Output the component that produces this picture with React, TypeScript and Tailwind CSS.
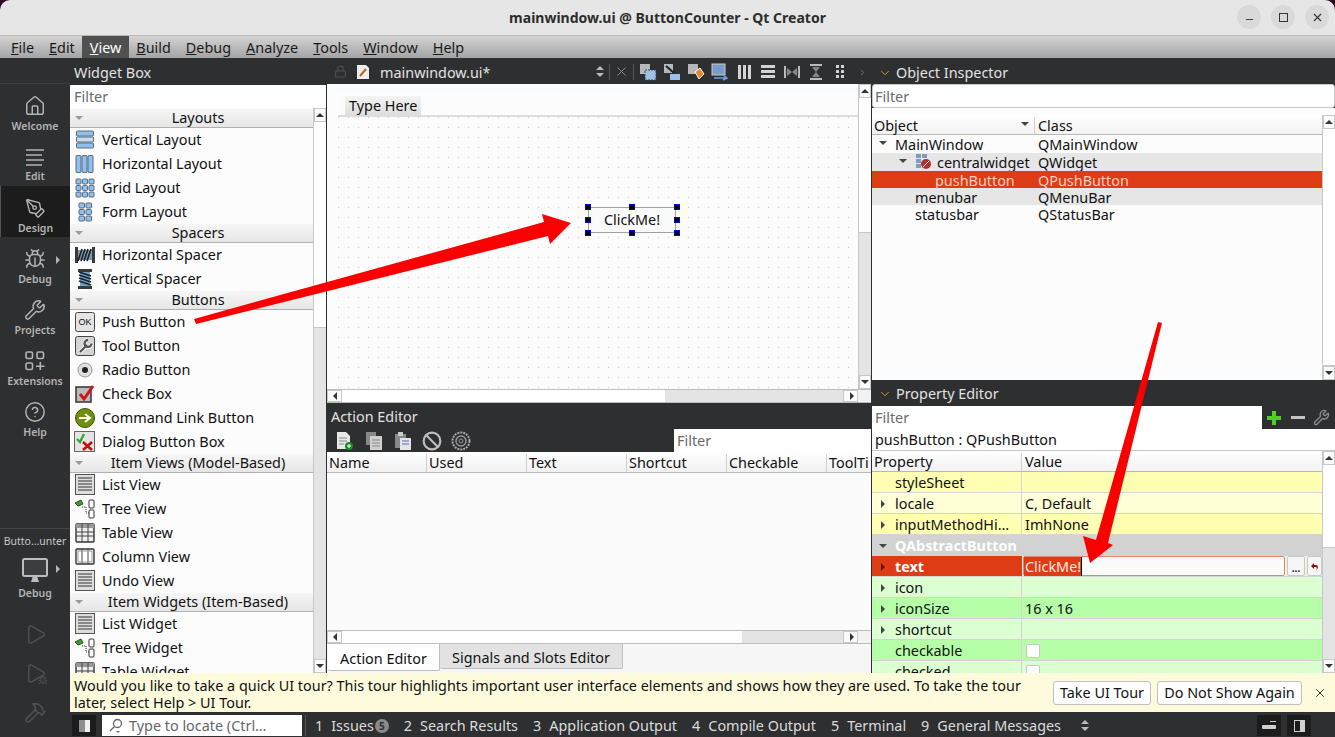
import React from 'react';
import { House, PenTool, Bug, Wrench, CircleHelp, Play, Hammer, ChevronDown, ChevronRight, X, Lock, Ban, Minus } from 'lucide-react';

const MENU = ['File', 'Edit', 'View', 'Build', 'Debug', 'Analyze', 'Tools', 'Window', 'Help'];

function Tri({ dir = 'down', className = '' }: { dir?: 'down' | 'up' | 'left' | 'right'; className?: string }) {
  const pts = { down: '0,1 8,1 4,5', up: '0,5 8,5 4,1', left: '5,0 5,8 1,4', right: '2,0 2,8 6,4' }[dir];
  const wide = dir === 'up' || dir === 'down';
  return (
    <svg width={wide ? 8 : 6} height={wide ? 6 : 8} viewBox={wide ? '0 0 8 6' : '0 0 6 8'} className={className}>
      <polygon points={pts} fill="currentColor" />
    </svg>
  );
}

function Bars({ kind }: { kind: string }) {
  const blue = '#8fc0ee';
  const edge = '#5a6a7a';
  if (kind === 'vlayout')
    return <svg width="20" height="20">{[1, 7, 13].map((y) => <rect key={y} x="1.5" y={y} width="17" height="5" fill={y === 7 ? '#c5dcf2' : blue} stroke={edge} rx="1" />)}</svg>;
  if (kind === 'hlayout')
    return <svg width="20" height="20">{[1, 7, 13].map((x) => <rect key={x} x={x} y="1.5" width="5" height="17" fill={blue} stroke={edge} rx="1" />)}</svg>;
  if (kind === 'grid')
    return <svg width="20" height="20">{[1, 7.5, 14].flatMap((x) => [1, 7.5, 14].map((y) => <rect key={`${x}-${y}`} x={x} y={y} width="5" height="5" fill={blue} stroke={edge} rx="1" />))}</svg>;
  if (kind === 'form')
    return <svg width="20" height="20">{[4, 11].flatMap((x) => [1, 7.5, 14].map((y) => <rect key={`${x}-${y}`} x={x} y={y} width="5.5" height="5" fill={blue} stroke={edge} rx="1" />))}</svg>;
  if (kind === 'hspacer')
    return (
      <svg width="20" height="20">
        <rect x="0" y="2" width="3" height="16" fill="#3a3a3a" /><rect x="17" y="2" width="3" height="16" fill="#3a3a3a" />
        <rect x="3" y="5" width="14" height="10" fill="#7f99ad" />
        {[3, 6, 9, 12].map((x) => <path key={x} d={`M${x} 16 L${x + 4} 4`} stroke="#17222c" strokeWidth="1.6" />)}
      </svg>
    );
  if (kind === 'vspacer')
    return (
      <svg width="20" height="20">
        <rect x="3" y="0" width="14" height="3" fill="#3a3a3a" /><rect x="3" y="17" width="14" height="3" fill="#3a3a3a" />
        <rect x="5" y="3" width="10" height="14" fill="#6fa0c8" />
        {[3, 6, 9, 12].map((y) => <path key={y} d={`M4 ${y} L16 ${y + 4}`} stroke="#17222c" strokeWidth="1.6" />)}
      </svg>
    );
  if (kind === 'push')
    return <svg width="20" height="20"><rect x="0.5" y="0.5" width="19" height="19" rx="2" fill="#e4e4e4" stroke="#444" /><text x="10" y="13" fontSize="9" textAnchor="middle" fill="#111" fontFamily="Liberation Sans, sans-serif">OK</text></svg>;
  if (kind === 'tool')
    return <svg width="20" height="20"><rect x="0.5" y="0.5" width="19" height="19" rx="2" fill="#d4d4d4" stroke="#444" /><path d="M5 16 L12 9 M13 4 a3.5 3.5 0 1 0 3.5 3.5" stroke="#fff" strokeWidth="4" fill="none" /><path d="M5 16 L12 9 M13 4 a3.5 3.5 0 1 0 3.5 3.5" stroke="#555" strokeWidth="2.4" fill="none" /></svg>;
  if (kind === 'radio')
    return <svg width="20" height="20"><circle cx="10" cy="10" r="7" fill="#e0e0e0" stroke="#999" /><circle cx="10" cy="10" r="3" fill="#222" /></svg>;
  if (kind === 'check')
    return <svg width="20" height="20"><rect x="1" y="3" width="15" height="15" fill="#bbb" stroke="#333" strokeWidth="1.5" /><path d="M5 10 L9 15 L18 2" stroke="#d2141e" strokeWidth="3" fill="none" /></svg>;
  if (kind === 'cmd')
    return <svg width="20" height="20"><circle cx="10" cy="10" r="9.5" fill="#6f8f0f" stroke="#3c500a" /><path d="M4 10 H14 M10 6 L15 10 L10 14" stroke="#fff" strokeWidth="2" fill="none" /></svg>;
  if (kind === 'dialog')
    return <svg width="22" height="22"><rect x="0.5" y="0.5" width="20" height="20" fill="#e4e4e4" stroke="#666" /><path d="M3 8 L6 11 L10 3" stroke="#35a83a" strokeWidth="2.4" fill="none" /><path d="M9 11 L18 19 M18 11 L9 19" stroke="#c01010" strokeWidth="2.6" /></svg>;
  if (kind === 'list')
    return <svg width="20" height="22"><rect x="0.5" y="0.5" width="19" height="20" fill="#ddd" stroke="#555" />{[3, 6, 9, 12, 15].map((y) => <rect key={y} x="3" y={y} width="14" height="2" fill="#888" />)}</svg>;
  if (kind === 'tree')
    return <svg width="22" height="20"><path d="M1 4 L7 1 L9 5 L4 7 Z" fill="#3f9a35" stroke="#1f5a1a" /><path d="M8 8 H12 M12 8 V14 H15" stroke="#333" strokeDasharray="1 1" fill="none" /><rect x="15" y="1" width="5" height="8" rx="1" fill="#fff" stroke="#333" /><rect x="15" y="11" width="5" height="8" rx="1" fill="#fff" stroke="#333" /></svg>;
  if (kind === 'table')
    return <svg width="20" height="20"><rect x="1" y="1" width="18" height="18" rx="1" fill="#eee" stroke="#333" strokeWidth="1.4" /><rect x="1" y="1" width="18" height="4" fill="#999" /><path d="M1 9 H19 M1 13 H19 M7 1 V19 M13 1 V19" stroke="#444" /></svg>;
  if (kind === 'column')
    return <svg width="20" height="20"><rect x="1" y="2" width="18" height="15" rx="1" fill="#fff" stroke="#333" strokeWidth="1.4" /><path d="M7 2 V17 M13 2 V17" stroke="#444" /><rect x="3" y="4" width="14" height="11" fill="none" stroke="#999" /></svg>;
  return null;
}

function WidgetRow({ icon, label }: { icon: string; label: string }) {
  return (
    <div className="h-6 flex items-center shrink-0">
      <div className="w-8 pr-[2px] flex justify-center shrink-0"><Bars kind={icon} /></div>
      <span className="text-[#111]">{label}</span>
    </div>
  );
}

function Category({ label }: { label: string }) {
  return (
    <div className="relative h-[19px] shrink-0 flex items-center justify-center bg-gradient-to-b from-[#f6f6f6] to-[#e6e6e6] border-b border-[#b0b0b0] text-[#111]">
      <Tri className="absolute left-[5px] top-[6px] text-[#999]" />
      <span className="pl-[13px]">{label}</span>
    </div>
  );
}

const BOX: { cat: string; items: [string, string][] }[] = [
  { cat: 'Layouts', items: [['vlayout', 'Vertical Layout'], ['hlayout', 'Horizontal Layout'], ['grid', 'Grid Layout'], ['form', 'Form Layout']] },
  { cat: 'Spacers', items: [['hspacer', 'Horizontal Spacer'], ['vspacer', 'Vertical Spacer']] },
  { cat: 'Buttons', items: [['push', 'Push Button'], ['tool', 'Tool Button'], ['radio', 'Radio Button'], ['check', 'Check Box'], ['cmd', 'Command Link Button'], ['dialog', 'Dialog Button Box']] },
  { cat: 'Item Views (Model-Based)', items: [['list', 'List View'], ['tree', 'Tree View'], ['table', 'Table View'], ['column', 'Column View'], ['list', 'Undo View']] },
  { cat: 'Item Widgets (Item-Based)', items: [['list', 'List Widget'], ['tree', 'Tree Widget'], ['table', 'Table Widget']] },
];

function ArrowBtn({ dir, className = '' }: { dir: 'up' | 'down' | 'left' | 'right'; className?: string }) {
  return (
    <div className={`flex items-center justify-center bg-[#fbfbfb] border border-[#c8c8c8] text-[#333] shrink-0 ${className}`}>
      <Tri dir={dir} />
    </div>
  );
}

function VScroll({ thumb }: { thumb: number }) {
  return (
    <div className="w-[13px] shrink-0 flex flex-col bg-[#e4e4e4] border-l border-[#c8c8c8]">
      <ArrowBtn dir="up" className="h-[14px]" />
      <div className="bg-white border-b border-[#c8c8c8]" style={{ height: thumb }} />
      <div className="flex-1" />
      <ArrowBtn dir="down" className="h-[14px]" />
    </div>
  );
}

function HScroll({ thumb }: { thumb: number }) {
  return (
    <div className="h-[14px] shrink-0 flex bg-[#e4e4e4] border-y border-[#bdbdbd]">
      <ArrowBtn dir="left" className="w-[15px]" />
      <div className="bg-white" style={{ width: thumb }} />
      <div className="flex-1" />
      <ArrowBtn dir="right" className="w-[15px]" />
      <div className="w-[13px] bg-[#f2f2f2]" />
    </div>
  );
}

function Mode({ icon, label, active }: { icon: React.ReactNode; label: string; active?: boolean }) {
  return (
    <div className={`h-[51px] pt-[8px] flex flex-col items-center justify-center gap-[3px] shrink-0 ${active ? 'bg-[#1c1c1c] border-l border-[#555]' : ''}`}>
      {icon}
      <span className="text-[10.5px] leading-[12px] font-semibold text-[#b4b4b4]">{label}</span>
    </div>
  );
}

function PanelHead({ label, chevron, className = '' }: { label: string; chevron?: boolean; className?: string }) {
  return (
    <div className={`bg-[#2e2f30] text-[#e2e2e2] flex items-center shrink-0 pt-[2px] ${className}`}>
      {chevron && <ChevronDown size={14} strokeWidth={1.5} className="text-[#d6a820] ml-[6px] mr-[4px]" />}
      <span>{label}</span>
    </div>
  );
}

function FormTools() {
  return (
    <div className="flex items-center mr-[19px] relative">
      <div className="w-6 flex justify-center"><svg width="18" height="18"><rect x="1" y="1" width="10" height="10" fill="#b8b8b8" /><rect x="6" y="7" width="11" height="10" fill="#9cc0e8" stroke="#345" strokeDasharray="2 1" /></svg></div>
      <div className="w-6 flex justify-center"><svg width="18" height="18"><rect x="1" y="1" width="9" height="9" fill="#b8b8b8" /><path d="M3 3 L11 10" stroke="#123" strokeWidth="2" /><rect x="7" y="11" width="10" height="6" fill="#9cc0e8" /></svg></div>
      <div className="w-6 flex justify-center"><svg width="18" height="18"><rect x="1" y="1" width="10" height="10" fill="#b8b8b8" /><path d="M8 9 L13 5 L17 11 L12 16 Z" fill="#e8862a" stroke="#fff" /></svg></div>
      <div className="w-6 flex justify-center"><svg width="18" height="18"><rect x="1" y="1" width="13" height="11" fill="#7b9bc8" stroke="#ccc" /><path d="M3 15 H15 M12 12 L16 15 L12 17" stroke="#6aa0e0" strokeWidth="1.5" fill="none" /></svg></div>
      <div className="w-6 flex justify-center gap-[2px]">{[0, 1, 2].map((i) => <div key={i} className="w-[3px] h-[14px] bg-[#d2d2d2]" />)}</div>
      <div className="w-6 flex flex-col items-center gap-[2px]">{[0, 1, 2].map((i) => <div key={i} className="w-[14px] h-[3px] bg-[#d2d2d2]" />)}</div>
      <div className="w-6 flex justify-center"><svg width="16" height="16"><path d="M1 2 V14 M15 2 V14" stroke="#bbb" strokeWidth="2" /><path d="M3 4 L8 8 L3 12 Z M13 4 L8 8 L13 12 Z" fill="#888" /></svg></div>
      <div className="w-6 flex justify-center"><svg width="16" height="16"><path d="M2 1 H14 M2 15 H14" stroke="#bbb" strokeWidth="2" /><path d="M4 3 L8 8 L12 3 Z M4 13 L8 8 L12 13 Z" fill="#888" /></svg></div>
      <div className="w-6 flex justify-center"><div className="grid grid-cols-2 gap-[2px]">{[0, 1, 2, 3, 4, 5].map((i) => <div key={i} className="w-[3px] h-[3px] bg-[#d2d2d2]" />)}</div></div>
      <ChevronRight size={9} className="absolute right-[-15px] top-[5px] text-[#8a8a8a]" />
    </div>
  );
}

function ActionTools() {
  return (
    <div className="flex items-center gap-[9px] pl-[8px]">
      <svg width="20" height="20"><path d="M2 1 H11 L15 5 V18 H2 Z" fill="#e8e8e8" /><path d="M4 7 H12 M4 10 H12 M4 13 H9" stroke="#888" /><circle cx="14" cy="15" r="4" fill="#1d8a2c" /><path d="M12 15 H16 M14 13 V17" stroke="#fff" /></svg>
      <svg width="20" height="20"><rect x="2" y="1" width="10" height="13" fill="#888" /><rect x="6" y="5" width="12" height="14" fill="#d0d0d0" /><path d="M8 9 H16 M8 12 H16 M8 15 H16" stroke="#888" /></svg>
      <svg width="20" height="20"><rect x="2" y="3" width="11" height="14" fill="#888" /><rect x="5" y="1" width="5" height="4" fill="#ccc" /><rect x="7" y="7" width="11" height="12" fill="#e4e4e4" /><path d="M9 10 H16 M9 13 H16" stroke="#5566cc" /></svg>
      <Ban size={20} strokeWidth={2.6} className="text-[#bdbdbd]" />
      <svg width="22" height="20"><circle cx="10" cy="10" r="8.5" fill="none" stroke="#aaa" strokeWidth="2" strokeDasharray="2 1" /><circle cx="10" cy="10" r="5" fill="none" stroke="#999" strokeWidth="1.5" /><circle cx="10" cy="10" r="2" fill="none" stroke="#999" /></svg>
    </div>
  );
}

function PropRow({ name, value, bg, arrow, children, valueClass = '' }: { name: string; value?: string; bg: string; arrow?: boolean; children?: React.ReactNode; valueClass?: string }) {
  return (
    <div className={`h-[21px] flex shrink-0 border-b border-[#d4d4d4] ${bg}`}>
      <div className="w-[150px] flex items-center border-r border-[#d4d4d4] shrink-0 pt-[2px]">
        <div className="w-[23px] pl-[7px] shrink-0 text-[#444]">{arrow && <Tri dir="right" />}</div>
        <span>{name}</span>
      </div>
      <div className={`flex-1 flex items-center pl-[3px] pt-[2px] ${valueClass}`}>{value}{children}</div>
    </div>
  );
}

function StatusTab({ n, label, badge }: { n: string; label: string; badge?: string }) {
  return (
    <div className="flex items-center text-[#dcdcdc] whitespace-nowrap">
      <span className="mr-[8px]">{n}</span>
      <span>{label}</span>
      {badge && <span className="ml-[1px] w-[14px] h-[14px] rounded-full bg-[#8a8a8a] text-[#2e2f30] text-[10px] font-bold flex items-center justify-center">{badge}</span>}
    </div>
  );
}

const OBJECTS = [
  { o: 'MainWindow', c: 'QMainWindow', x: 23, h: 'h-[18px]', tri: 7 },
  { o: 'centralwidget', c: 'QWidget', x: 65, h: 'h-[18px] bg-[#e6e6e6]', tri: 27, ic: true },
  { o: 'pushButton', c: 'QPushButton', x: 63, h: 'h-[17px] pt-[2px] bg-[#dd3c15] text-[#ffd0c0]' },
  { o: 'menubar', c: 'QMenuBar', x: 43, h: 'h-[17px] pt-[2px] bg-[#e6e6e6]' },
  { o: 'statusbar', c: 'QStatusBar', x: 43, h: 'h-[17px] pt-[2px]' },
];

const HANDLES = [[247, 109], [291, 109], [336, 109], [247, 122], [336, 122], [247, 135], [291, 135], [336, 135]];

export default function App() {
  return (
    <div className="relative w-[1335px] h-[737px] overflow-hidden bg-[#300a24] font-['Noto_Sans',sans-serif] text-[14.4px] leading-[18px] text-[#111]">
      {/* window title */}
      <div className="relative h-[36px] rounded-t-[10px] bg-[#e6e6e6] border-b border-[#b8b8b8] flex items-center justify-center">
        <span className="font-bold text-[14px] text-[#2d2d2d]">mainwindow.ui @ ButtonCounter - Qt Creator</span>
        <div className="absolute right-[6px] top-[5px] flex gap-[10px]">
          <div className="w-6 h-6 rounded-full bg-[#d9d9d9] flex items-center justify-center pt-[4px]"><Minus size={11} className="text-[#333]" /></div>
          <div className="w-6 h-6 rounded-full bg-[#d9d9d9] flex items-center justify-center"><div className="w-[9px] h-[9px] border border-[#333]" /></div>
          <div className="w-6 h-6 rounded-full bg-[#d9d9d9] flex items-center justify-center"><X size={13} className="text-[#333]" /></div>
        </div>
      </div>
      {/* menu bar */}
      <div className="h-[23px] flex items-stretch pl-[3.5px] bg-gradient-to-b from-[#d4d4d4] to-[#a4a4a4] border-b border-[#2e2f30]">
        {MENU.map((m) => (
          <div key={m} className={`px-[7.5px] pt-[2px] flex items-center ${m === 'View' ? 'bg-[#505050] text-white' : 'text-[#1a1a1a]'}`}>
            <span><span className="underline">{m[0]}</span>{m.slice(1)}</span>
          </div>
        ))}
      </div>

      <div className="flex h-[678px] bg-[#2e2f30]">
        {/* mode sidebar */}
        <div className="w-[70px] shrink-0 flex flex-col">
          <div className="h-[25px] shrink-0 border-b border-[#3c3d3e]" />
          <Mode label="Welcome" icon={<House size={22} strokeWidth={1.6} className="text-[#b4b4b4]" />} />
          <Mode label="Edit" icon={
            <svg width="20" height="20"><path d="M1 3 H19 M1 8 H17 M1 13 H19 M1 18 H17" stroke="#b4b4b4" strokeWidth="1.6" /></svg>
          } />
          <Mode active label="Design" icon={<PenTool size={21} strokeWidth={1.6} className="text-[#b4b4b4]" />} />
          <div className="relative">
            <Mode label="Debug" icon={<Bug size={22} strokeWidth={1.6} className="text-[#b4b4b4]" />} />
            <Tri dir="right" className="absolute right-[10px] top-[19px] text-[#b4b4b4]" />
          </div>
          <Mode label="Projects" icon={<Wrench size={22} strokeWidth={1.6} className="text-[#b4b4b4]" />} />
          <Mode label="Extensions" icon={
            <svg width="22" height="22" fill="none" stroke="#b4b4b4" strokeWidth="1.6"><rect x="2" y="2" width="6.5" height="6.5" rx="1.5" /><rect x="13" y="2" width="6.5" height="6.5" rx="1.5" /><rect x="2" y="13" width="6.5" height="6.5" rx="1.5" /><path d="M16.3 12 V20 M12 16.3 H20.5" /></svg>
          } />
          <Mode label="Help" icon={<CircleHelp size={22} strokeWidth={1.6} className="text-[#b4b4b4]" />} />
          <div className="h-[88px] shrink-0 border-b border-[#454647]" />
          <div className="h-[24px] shrink-0 flex items-center justify-center text-[10.5px] text-[#c8c8c8]">Butto…unter</div>
          <div className="relative h-[52px] flex flex-col items-center shrink-0 pt-[4px] gap-[4px]">
            <svg width="26" height="26"><rect x="1" y="2" width="24" height="17" rx="1.5" fill="#3c3d3e" stroke="#bdbdbd" strokeWidth="2" /><path d="M9 25 L11 19 H15 L17 25 Z" fill="#bdbdbd" /></svg>
            <span className="text-[10.5px] leading-[12px] font-semibold text-[#b4b4b4]">Debug</span>
            <Tri dir="right" className="absolute right-[10px] top-[12px] text-[#b4b4b4]" />
          </div>
          <div className="flex-1 flex flex-col items-center gap-[16px] pt-[18px] text-[#4f5051]">
            <Play size={23} strokeWidth={1.6} />
            <div className="relative"><Play size={23} strokeWidth={1.6} /><Bug size={10} className="absolute right-[-1px] bottom-0" /></div>
            <Hammer size={23} strokeWidth={1.6} />
          </div>
        </div>

        <div className="flex-1 min-w-0 flex flex-col">
          <div className="flex h-[614px] shrink-0">
            {/* widget box */}
            <div className="w-[256px] shrink-0 flex flex-col">
              <PanelHead label="Widget Box" className="h-[26px] pl-[4px]" />
              <div className="h-[23px] shrink-0 bg-white flex items-center pl-[4px] text-[#6a6a6a]">Filter</div>
              <div className="flex-1 min-h-0 flex bg-[#fcfcfc]">
                <div className="flex-1 min-w-0 flex flex-col overflow-hidden pt-px">
                  {BOX.map((g) => (
                    <React.Fragment key={g.cat}>
                      <Category label={g.cat} />
                      {g.items.map(([icon, label]) => <WidgetRow key={label} icon={icon} label={label} />)}
                    </React.Fragment>
                  ))}
                </div>
                <VScroll thumb={206} />
              </div>
            </div>

            {/* form editor column */}
            <div className="w-[544px] shrink-0 ml-px flex flex-col">
              <div className="h-[25px] shrink-0 flex items-center bg-[#2e2f30] text-[#e2e2e2]">
                <Lock size={13} className="text-[#4f5051] ml-[7px]" />
                <svg width="14" height="16" className="ml-[9px]"><path d="M1 1 H10 L13 4 V15 H1 Z" fill="#eee" /><path d="M4 12 L10 5" stroke="#b5651d" strokeWidth="2" /></svg>
                <span className="ml-[10px] pt-[2px]">mainwindow.ui*</span>
                <div className="flex-1" />
                <div className="flex flex-col gap-[1px] mr-[5px] text-[#bbb]"><Tri dir="up" /><Tri dir="down" /></div>
                <div className="w-px h-[16px] bg-[#555]" />
                <X size={15} strokeWidth={1.2} className="text-[#aaa] mx-[4px]" />
                <div className="w-px h-[16px] bg-[#555] mr-[2px]" />
                <FormTools />
              </div>
              <div className="h-[305px] shrink-0 flex bg-[#fcfcfc]">
                <div className="flex-1 min-w-0 pl-[10px] pt-[10px] overflow-hidden">
                  <div className="relative h-full border-l border-t border-white">
                    <div className="h-[22px] pl-[7px] pt-[1px] border-b-2 border-[#dcdcdc]">
                      <span className="inline-block h-[19px] pt-[1px] px-[4px] bg-gradient-to-b from-[#f4f4f4] to-[#dedede]">Type Here</span>
                    </div>
                    <div className="h-full bg-[radial-gradient(circle_at_0.5px_0.5px,#c8c8c8_0.7px,transparent_0.8px)] bg-[length:10px_10px]" />
                    <div className="absolute left-[250px] top-[112px] w-[88px] h-[26px] border border-[#a0a0a0] bg-[#fafafa] flex items-center justify-center">ClickMe!</div>
                    {HANDLES.map(([x, y]) => (
                      <div key={`${x}-${y}`} className="absolute w-[6px] h-[6px] bg-black border border-[#0000e0]" style={{ left: x, top: y }} />
                    ))}
                  </div>
                </div>
                <VScroll thumb={135} />
              </div>
              <HScroll thumb={323} />
              <PanelHead label="Action Editor" className="h-[26px] pl-[4px]" />
              <div className="h-[23px] shrink-0 flex items-center justify-between bg-[#2e2f30]">
                <ActionTools />
                <div className="w-[197px] h-full bg-white flex items-center pl-[3px] text-[#6a6a6a]">Filter</div>
              </div>
              <div className="h-[21px] shrink-0 pt-[2px] flex bg-gradient-to-b from-white to-[#f0f0f0] border-b border-[#b8b8b8] overflow-hidden">
                {['Name', 'Used', 'Text', 'Shortcut', 'Checkable'].map((h) => (
                  <div key={h} className="w-[100px] pl-[2px] border-r border-[#d0d0d0] flex items-center shrink-0">{h}</div>
                ))}
                <div className="pl-[2px] flex items-center whitespace-nowrap">ToolTi</div>
              </div>
              <div className="flex-1 bg-[#fbfbfb]" />
              <HScroll thumb={400} />
              <div className="h-[29px] shrink-0 flex items-start bg-[#f6f6f6]">
                <div className="h-[27px] w-[112px] ml-px bg-white border-r border-b border-[#c0c0c0] rounded-b-[2px] flex items-center justify-center pt-[3px]">Action Editor</div>
                <div className="h-[25px] w-[183px] bg-[#e2e2e2] border-r border-b border-[#c0c0c0] rounded-b-[2px] flex items-center justify-center pt-[3px]">Signals and Slots Editor</div>
              </div>
            </div>

            {/* object inspector and property editor */}
            <div className="flex-1 min-w-0 ml-px flex flex-col">
              <PanelHead chevron label="Object Inspector" className="h-[25px]" />
              <div className="h-[24px] shrink-0 pt-px bg-white border border-[#c8c8c8] rounded-[3px] flex items-center pl-[2px] text-[#6a6a6a]">Filter</div>
              <div className="h-[272px] shrink-0 flex bg-[#fcfcfc] pt-[7px]">
                <div className="flex-1 min-w-0 flex flex-col">
                  <div className="h-[20px] shrink-0 pt-[2px] flex border-b border-[#b8b8b8] bg-gradient-to-b from-white to-[#f2f2f2]">
                    <div className="relative w-[163px] pl-[2px] border-r border-[#d0d0d0] flex items-center">Object<Tri className="absolute right-[5px] top-[4px] text-[#444]" /></div>
                    <div className="pl-[3px] flex items-center">Class</div>
                  </div>
                  {OBJECTS.map((r) => (
                    <div key={r.o} className={`relative flex items-center shrink-0 leading-[15px] ${r.h}`}>
                      {r.tri !== undefined && (
                        <div className="absolute top-[5px] text-[#444]" style={{ left: r.tri }}><Tri /></div>
                      )}
                      {r.ic && (
                        <svg width="17" height="17" className="absolute left-[43px] top-0"><rect x="1" y="1" width="5" height="4" fill="#7f9cc0" /><rect x="7" y="1" width="5" height="4" fill="#7f9cc0" /><rect x="1" y="6" width="5" height="4" fill="#7f9cc0" /><rect x="1" y="11" width="5" height="4" fill="#7f9cc0" /><circle cx="11" cy="11" r="5" fill="#b03030" /><path d="M8 14 L14 8" stroke="#fff" /></svg>
                      )}
                      <div className="shrink-0 w-[163px] whitespace-nowrap" style={{ paddingLeft: r.x }}>{r.o}</div>
                      <div className="pl-[3px]">{r.c}</div>
                    </div>
                  ))}
                </div>
                <VScroll thumb={237} />
              </div>
              <PanelHead chevron label="Property Editor" className="h-[26px]" />
              <div className="h-[23px] shrink-0 flex items-center bg-[#2e2f30]">
                <div className="w-[390px] h-full bg-white flex items-center pl-[3px] text-[#6a6a6a]">Filter</div>
                <svg width="20" height="18" className="ml-[4px]"><path d="M8 2 V16 M1 9 H15" stroke="#52d01f" strokeWidth="4" /></svg>
                <div className="w-[14px] h-[3px] bg-[#c4c4c4] ml-[5px]" />
                <Wrench size={17} className="text-[#8a8a8a] ml-[8px]" />
              </div>
              <div className="h-[22px] shrink-0 bg-white border-b border-[#c8c8c8] flex items-center pl-[3px]">pushButton : QPushButton</div>
              <div className="flex-1 min-h-0 flex bg-[#fcfcfc]">
                <div className="flex-1 min-w-0 flex flex-col overflow-hidden">
                  <div className="h-[21px] shrink-0 pt-[2px] flex border-b border-[#b8b8b8] bg-gradient-to-b from-white to-[#f2f2f2]">
                    <div className="w-[150px] pl-[2px] border-r border-[#d0d0d0] flex items-center shrink-0">Property</div>
                    <div className="pl-[3px] flex items-center">Value</div>
                  </div>
                  <PropRow name="styleSheet" bg="bg-[#ffffb4]" />
                  <PropRow name="locale" value="C, Default" bg="bg-[#ffffd8]" arrow />
                  <PropRow name="inputMethodHi…" value="ImhNone" bg="bg-[#ffffb4]" arrow />
                  <div className="h-[21px] shrink-0 flex items-center bg-[#d2d2d2] text-white font-bold">
                    <div className="w-[23px] pl-[7px] text-[#444]"><Tri /></div>QAbstractButton
                  </div>
                  <div className="h-[21px] shrink-0 flex bg-[#dd3c15] border-b border-[#d4d4d4]">
                    <div className="w-[150px] flex items-center shrink-0 pt-[2px] text-white font-bold">
                      <div className="w-[23px] pl-[7px] text-[#5a1a08]"><Tri dir="right" /></div>text
                    </div>
                    <div className="flex-1 flex items-stretch bg-[#e8f8e0]">
                      <div className="flex-1 flex items-center bg-[#fbfbfb] border border-[#e8826a] rounded-[2px] ml-px">
                        <span className="bg-[#dd3c15] text-[#ffe8e0] pl-px pt-px border-r border-black">ClickMe!</span>
                      </div>
                      <div className="w-[18px] ml-[2px] bg-[#f6f6f6] border border-[#c8c8c8] rounded-[2px] flex items-center justify-center font-bold text-[10px] pt-[4px]">...</div>
                      <div className="w-[15px] ml-[2px] bg-[#f6f6f6] border border-[#c8c8c8] rounded-[2px] flex items-center justify-center">
                        <svg width="9" height="9"><path d="M4 1 L1 4 L4 7 V5 H6 C7 5 7 7 6 8 C8.5 7 8.5 3 6 3 H4 Z" fill="#8a1010" /></svg>
                      </div>
                    </div>
                  </div>
                  <PropRow name="icon" bg="bg-[#dcffd2]" arrow />
                  <PropRow name="iconSize" value="16 x 16" bg="bg-[#b6ffa8]" arrow />
                  <PropRow name="shortcut" bg="bg-[#dcffd2]" arrow />
                  <PropRow name="checkable" bg="bg-[#b6ffa8]" valueClass="pl-[4px]">
                    <div className="w-[14px] h-[14px] bg-white border border-[#c8c8c8] rounded-[2px]" />
                  </PropRow>
                  <PropRow name="checked" bg="bg-[#dcffd2]" valueClass="pl-[4px]">
                    <div className="w-[14px] h-[14px] bg-white border border-[#c8c8c8] rounded-[2px]" />
                  </PropRow>
                </div>
                <VScroll thumb={83} />
              </div>
            </div>
          </div>

          {/* tour banner */}
          <div className="h-[39px] shrink-0 bg-[#fefbdc] flex items-center pl-[4px]">
            <p className="w-[960px] pt-[2px] leading-[17px] text-[#111]">Would you like to take a quick UI tour? This tour highlights important user interface elements and shows how they are used. To take the tour later, select Help &gt; UI Tour.</p>
            <div className="flex-1" />
            <button className="h-[24px] w-[98px] bg-white border border-[#c0c0c0] rounded-[3px] mr-[6px]">Take UI Tour</button>
            <button className="h-[24px] w-[145px] bg-white border border-[#c0c0c0] rounded-[3px] mr-[11px]">Do Not Show Again</button>
            <X size={14} strokeWidth={1.6} className="mr-[8px] text-[#222]" />
          </div>

          {/* status bar */}
          <div className="h-[25px] shrink-0 pt-[2px] flex items-center bg-[#2e2f30]">
            <div className="w-[24px] h-[21px] ml-[2px] bg-[#1c1c1c] flex items-center justify-center">
              <div className="w-[11px] h-[12px] bg-gradient-to-r from-[#8f8f8f] from-50% to-[#f0f0f0] to-50%" />
            </div>
            <div className="w-[200px] h-[21px] ml-[6px] bg-white flex items-center pl-[7px] text-[#666]">
              <svg width="14" height="15" fill="none" stroke="#666" strokeWidth="1.3" className="mr-[6px]"><circle cx="8.5" cy="5.5" r="4" /><path d="M5.5 8.5 L1 13" /><path d="M7 13 H11 L9 15 Z" fill="#666" stroke="none" /></svg>
              Type to locate (Ctrl…
            </div>
            <div className="w-px h-[21px] bg-[#555] ml-[3px] mr-[9px]" />
            <div className="flex items-center gap-[15px]">
              <StatusTab n="1" label="Issues" badge="5" />
              <StatusTab n="2" label="Search Results" />
              <StatusTab n="3" label="Application Output" />
              <StatusTab n="4" label="Compile Output" />
              <StatusTab n="5" label="Terminal" />
              <StatusTab n="9" label="General Messages" />
            </div>
            <div className="flex flex-col gap-[1px] ml-[20px] text-[#bbb]"><Tri dir="up" /><Tri dir="down" /></div>
            <div className="flex-1" />
            <div className="w-[24px] h-[21px] bg-[#1c1c1c] flex items-center justify-center relative">
              <div className="w-[14px] h-[4px] bg-[#cfcfcf] rounded-[1px] mt-[3px]" />
              <div className="absolute right-[5px] top-[6px] w-[6px] h-px bg-[#cfcfcf]" />
            </div>
            <div className="w-[24px] h-[21px] ml-[6px] mr-[24px] bg-[#1c1c1c] flex items-center justify-center"><div className="w-[11px] h-[12px] border border-[#cfcfcf] bg-gradient-to-r from-[#1c1c1c] from-50% to-[#cfcfcf] to-50%" /></div>
          </div>
        </div>
      </div>

      {/* annotation arrows drawn over the app */}
      <svg width="1335" height="737" className="absolute inset-0 pointer-events-none">
        <polygon points="194,319 196,324 548,236 550,244 571,223 542,214 544,222" fill="#fb0000" />
        <polygon points="1158,322 1162,323 1108,543 1113,545 1090,563 1083,536 1096,540" fill="#fb0000" />
      </svg>
    </div>
  );
}
